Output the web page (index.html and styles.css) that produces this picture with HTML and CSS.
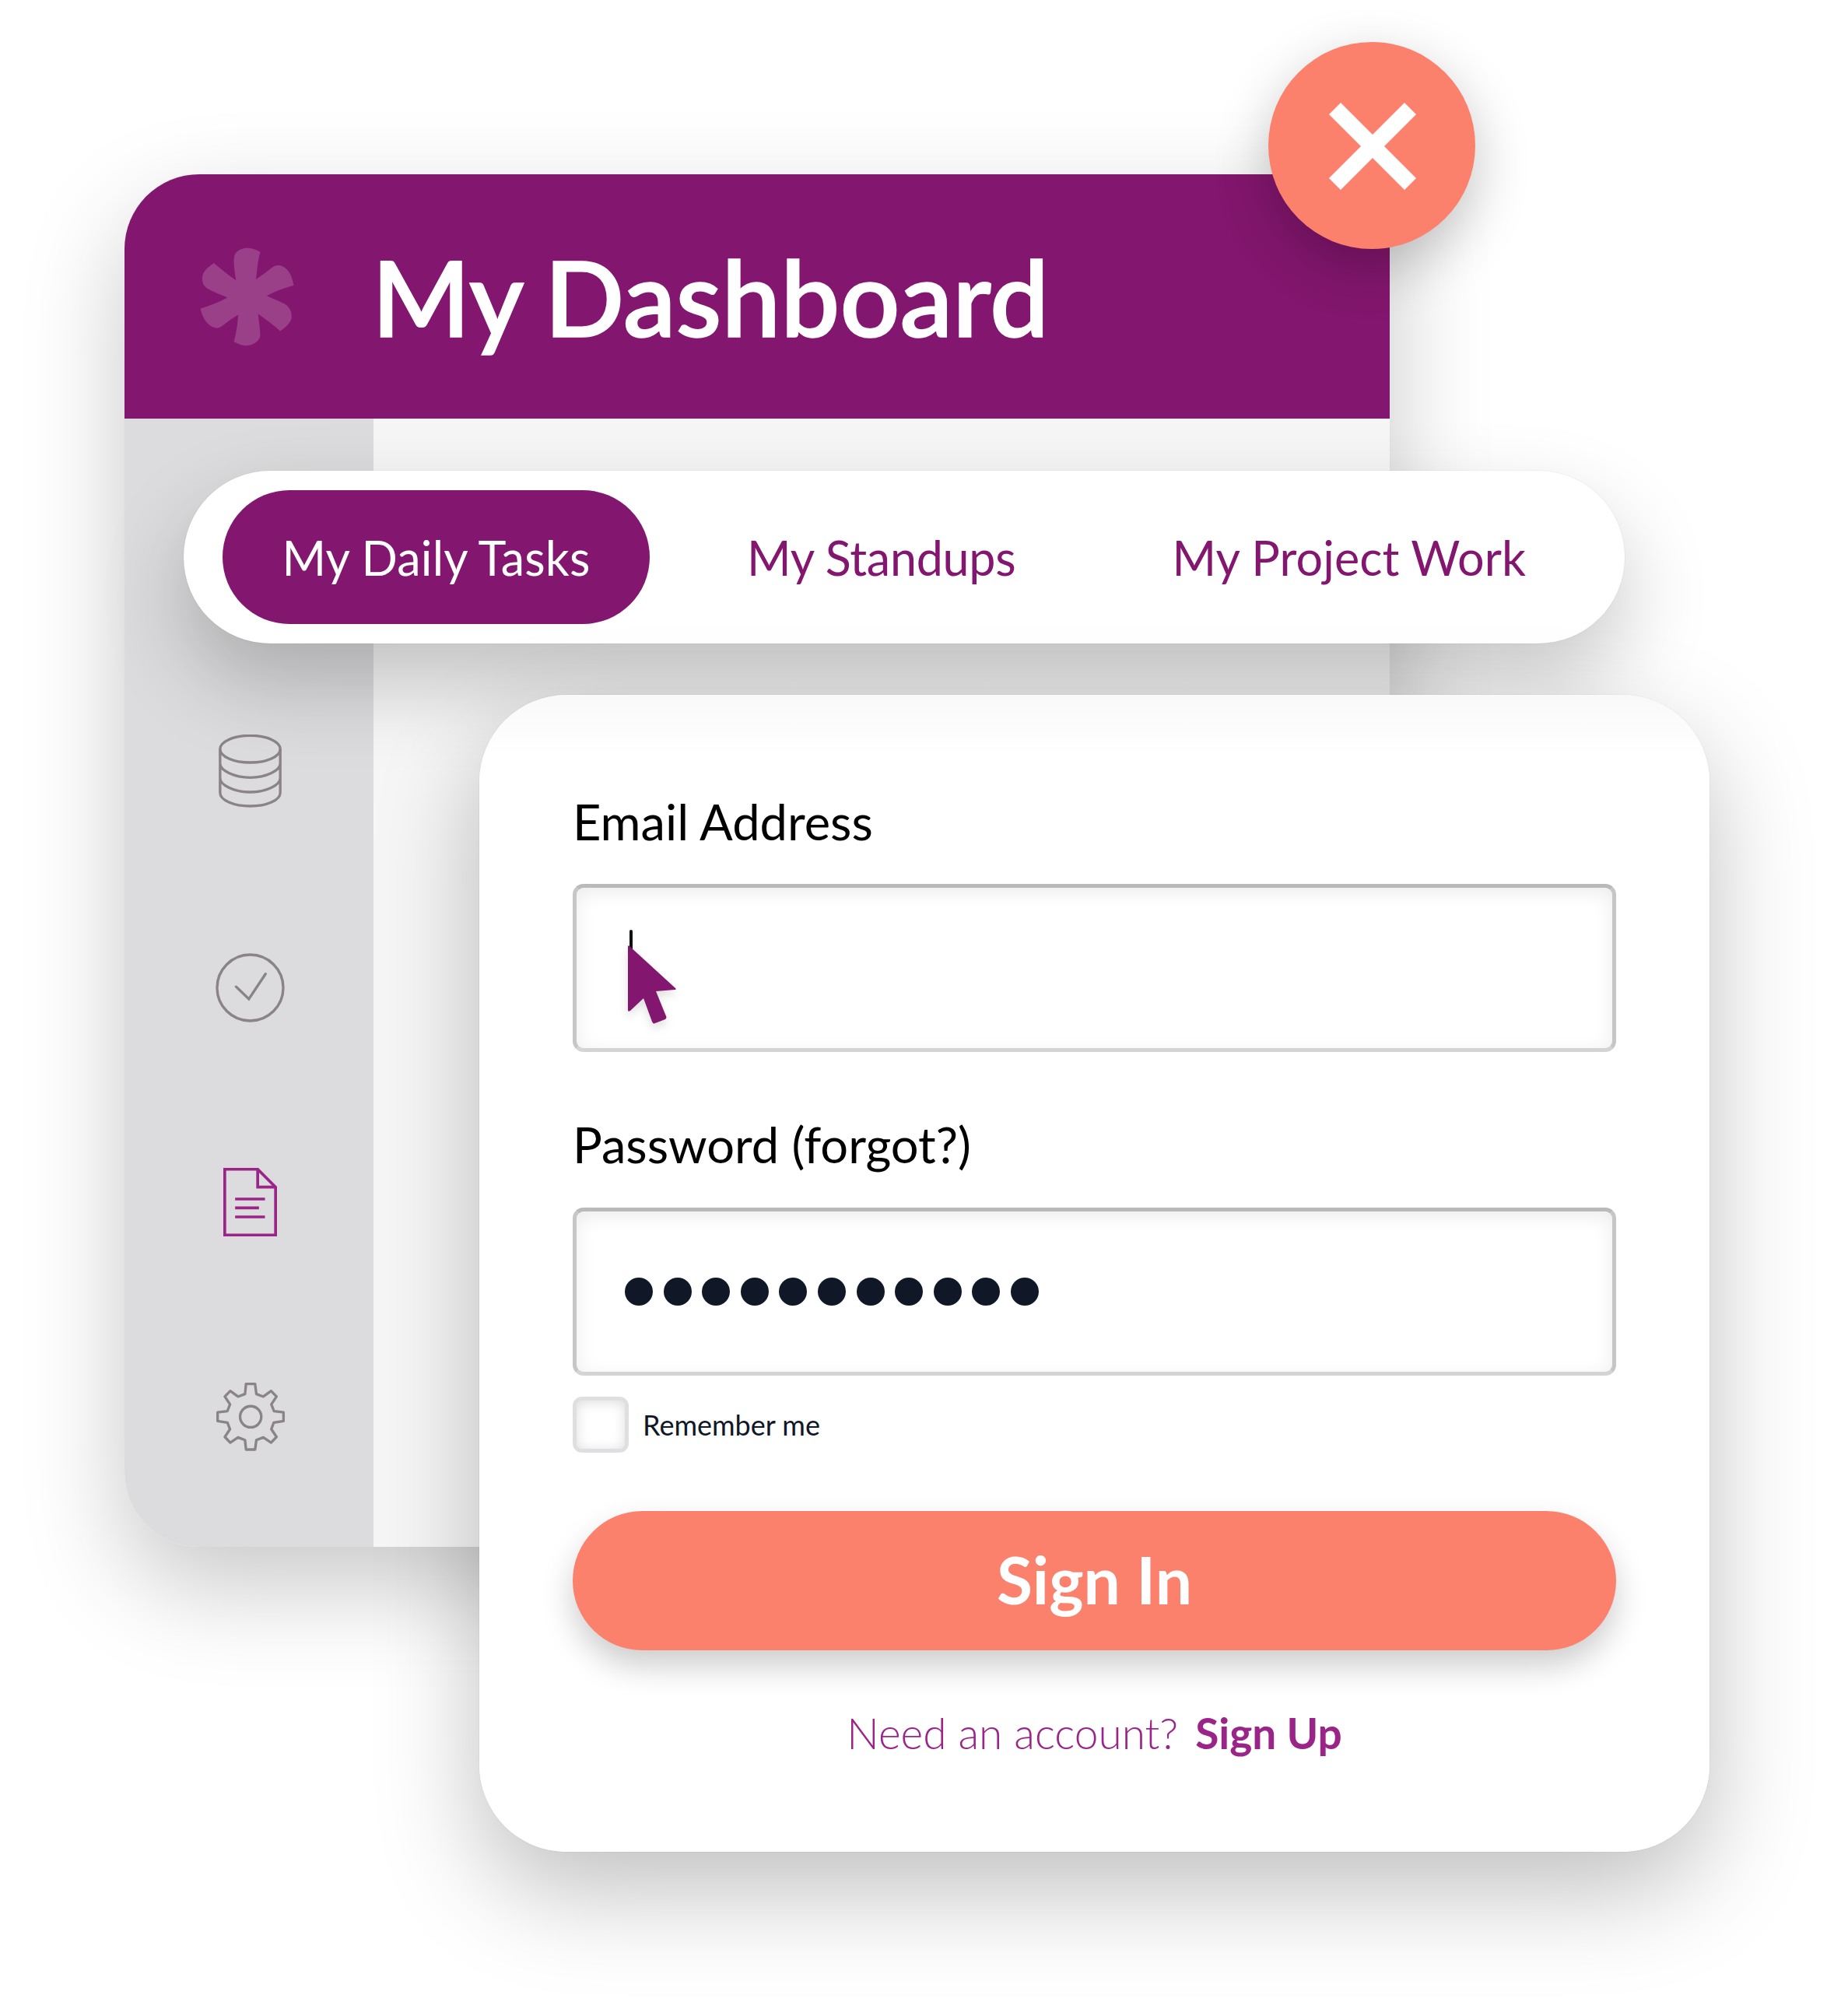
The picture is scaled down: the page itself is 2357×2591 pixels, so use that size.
FILE: index.html
```html
<!DOCTYPE html>
<html lang="en">
<head>
<meta charset="utf-8">
<title>My Dashboard</title>
<link rel="stylesheet" href="styles.css">
</head>
<body>
<div class="stage">
  <section class="dash">
    <header class="dash-head">
      <svg class="logo" viewBox="350 355 362 382"><path d="M488 482C482 440 478 410 481 392C486 362 520 356 535 357C552 358 570 365 582 372C572 410 570 440 566 478C600 455 620 438 635 428C650 420 670 424 685 440C700 455 708 480 711 502C675 512 640 525 607 542C640 557 665 566 680 575C698 588 706 610 703 628C698 650 675 668 659 678C630 652 600 630 574 612C576 640 582 670 582 695C580 720 550 735 525 735C510 735 495 727 480 720C490 685 494 650 497 615C470 630 450 648 432 660C415 672 395 665 380 650C362 632 355 610 351 591C390 580 425 565 455 549C425 535 395 525 375 512C355 498 355 470 362 455C372 435 390 425 403 415C430 440 460 462 488 482Z"/></svg>
      <h1 class="dash-title">My Dashboard</h1>
    </header>
    <div class="dash-body">
      <aside class="side">
        <svg class="ico ico-db" viewBox="125 132 242 282"><g class="line"><ellipse cx="246" cy="188" rx="116" ry="52"/><path d="M130 188V356C130 385 182 408 246 408S362 385 362 356V188M130 244C130 270 182 298 246 298S362 270 362 244M130 300C130 326 182 354 246 354S362 326 362 300"/></g></svg>
        <svg class="ico ico-check" viewBox="113 970 266 266"><g class="line"><circle cx="246" cy="1103" r="127"/><path d="M192 1099L241 1146L305 1050" stroke-linecap="round"/></g></svg>
        <svg class="ico ico-doc" viewBox="143 120 206 264"><g class="line line-accent"><path d="M148 125H275L344 194V379H148Z"/><path d="M275 125V194H344M188 240H303M188 274H280M188 309H303"/></g></svg>
        <svg class="ico ico-gear" viewBox="113 948 265 265"><g class="line"><path d="M228 953H263L268 992L295 1002L325 980L346 1002L326 1032L336 1058L373 1063V1097L335 1103L326 1128L346 1158L325 1180L295 1160L268 1170L263 1207H228L224 1170L197 1160L167 1180L146 1158L166 1128L156 1103L118 1097V1063L156 1058L166 1032L146 1002L167 980L197 1002L224 992Z" stroke-linejoin="round"/><circle cx="246" cy="1080" r="41"/></g></svg>
      </aside>
      <div class="dash-main"></div>
    </div>
  </section>

  <button class="close" aria-label="Close">
    <svg class="close-x" viewBox="0 0 112 112"><path d="M15 0L56 41L97 0L112 15L71 56L112 97L97 112L56 71L15 112L0 97L41 56L0 15Z"/></svg>
  </button>

  <nav class="tabs">
    <a class="tab tab-active">My Daily Tasks</a>
    <a class="tab tab-second">My Standups</a>
    <a class="tab tab-third">My Project Work</a>
  </nav>

  <form class="card">
    <label class="label">Email Address</label>
    <div class="field field-email">
      <span class="caret"></span>
      <svg class="cursor" viewBox="0 0 64 104"><path d="M3 1L62 55C63 56 63 57 61 57L37 59L50 91C51 93 50 94 49 95L36 100C34 101 33 100 32 98L21 68L4 84C2 85 1 85 1 83V2C1 0 2 0 3 1Z"/></svg>
    </div>
    <label class="label label-pass">Password (forgot?)</label>
    <div class="field field-pass">
      <i class="dot"></i><i class="dot"></i><i class="dot"></i><i class="dot"></i><i class="dot"></i><i class="dot"></i><i class="dot"></i><i class="dot"></i><i class="dot"></i><i class="dot"></i><i class="dot"></i>
    </div>
    <div class="remember"><span class="box"></span><span class="remember-text">Remember me</span></div>
    <div class="signin">Sign In</div>
    <p class="signup">Need an account?<b class="signup-link">Sign Up</b></p>
  </form>
</div>
</body>
</html>
```
FILE: styles.css
```css
html, body { margin: 0; padding: 0; background: #fff; }
body { font-family: Lato, "Open Sans", sans-serif; }
.stage { position: relative; width: 2357px; height: 2591px; overflow: hidden; }

.dash {
  position: absolute; left: 160px; top: 224px; width: 1626px; height: 1764px;
  border-radius: 96px 0 0 96px; display: flex; flex-direction: column;
  box-shadow: 0 50px 130px rgba(0,0,0,.22);
}
.dash-head {
  height: 314px; background: #83166e; border-radius: 96px 0 0 0;
  display: flex; align-items: center; box-sizing: border-box; padding-left: 97px;
}
.logo { width: 121px; height: 127px; fill: #9a4089; margin-top: 1px; }
.dash-title {
  margin: 0 0 0 100px; font-size: 135px; font-weight: 600; color: #fff; line-height: 1;
  word-spacing: -4px; -webkit-text-stroke: 1.5px #fff;
}
.dash-body { flex: 1; display: flex; min-height: 0; }
.side {
  width: 320px; background: #dcdbdd; border-radius: 0 0 0 96px; box-sizing: border-box;
  padding: 406px 0 0 3px; display: flex; flex-direction: column; align-items: center; gap: 187.5px;
}
.dash-main { flex: 1; background: #f6f6f7; }
.ico { display: block; flex: none; }
.ico-db { width: 81px; height: 94px; margin-bottom: -1px; }
.ico-check { width: 89px; height: 89px; }
.ico-doc { width: 69px; height: 88px; }
.ico-gear { width: 88px; height: 88px; }
.line { fill: none; stroke: #8a8388; stroke-width: 10; }
.line-accent { stroke: #9b2488; stroke-width: 11; }

.close {
  position: absolute; left: 1630px; top: 54px; width: 266px; height: 266px; padding: 2px 0 0 2px; border: 0;
  border-radius: 50%; background: #fb816d; display: flex; align-items: center; justify-content: center;
  box-shadow: 0 24px 70px rgba(0,0,0,.24);
}
.close-x { width: 112px; height: 112px; fill: #fff; }

.tabs {
  position: absolute; left: 236px; top: 605px; width: 1852px; height: 222px; box-sizing: border-box;
  background: #fff; border-radius: 111px; padding: 25px 0 0 50px; display: flex; align-items: flex-start;
  box-shadow: 0 50px 110px rgba(0,0,0,.22), 0 0 0 1px rgba(0,0,0,.03);
}
.tab { font-size: 61px; padding-top: 2px; line-height: 170px; color: #83166e; white-space: nowrap; }
.tab-active { width: 549px; background: #83166e; color: #fff; border-radius: 86px; text-align: center; letter-spacing: .2px; }
.tab-second { margin-left: 125px; letter-spacing: -.25px; }
.tab-third { margin-left: 201px; letter-spacing: .1px; }

.card {
  position: absolute; left: 616px; top: 893px; width: 1581px; height: 1487px; box-sizing: border-box;
  background: linear-gradient(#f9f9f9, #fff 80px); border-radius: 112px; padding: 123px 120px 0;
  display: flex; flex-direction: column;
  box-shadow: 0 50px 130px rgba(0,0,0,.25), 0 0 0 1px rgba(0,0,0,.03);
}
.label { font-size: 63.2px; line-height: 80px; color: #000; }
.label-pass { margin-top: 79px; }
.field {
  box-sizing: border-box; height: 216px; margin-top: 40px; border: 5px solid #c6c6c8;
  border-top-color: #bababc; border-bottom-color: #d4d4d4; border-radius: 14px;
  box-shadow: inset 0 6px 24px rgba(0,0,0,.08); position: relative;
}
.field-pass { display: flex; align-items: center; gap: 13.6px; padding-left: 62px; margin-top: 41px; }
.dot { width: 36px; height: 36px; border-radius: 50%; background: #101828; flex: none; }
.caret { position: absolute; left: 68px; top: 54px; width: 4px; height: 28px; background: #111; border-radius: 2px; }
.cursor {
  position: absolute; left: 65px; top: 74px; width: 64px; height: 104px; fill: #83166e;
  filter: drop-shadow(0 6px 6px rgba(0,0,0,.12));
}
.remember { display: flex; align-items: center; margin-top: 27px; }
.box {
  box-sizing: border-box; width: 72px; height: 72px; border: 5px solid #dfdfe1; border-radius: 12px;
  box-shadow: inset 0 2px 16px rgba(0,0,0,.14);
}
.remember-text { margin: 0 0 0 18px; font-size: 36px; color: #101828; }
.signin {
  height: 179px; margin-top: 75px; border-radius: 90px; background: #fb816d; color: #fff;
  font-size: 84px; font-weight: 700; text-align: center; line-height: 176px;
  box-shadow: 0 20px 40px rgba(0,0,0,.2);
}
.signup { margin: 71px 0 0; font-size: 55px; line-height: 70px; font-weight: 300; color: #9b2488; text-align: center; }
.signup-link { margin-left: 22px; font-weight: 700; }
```
